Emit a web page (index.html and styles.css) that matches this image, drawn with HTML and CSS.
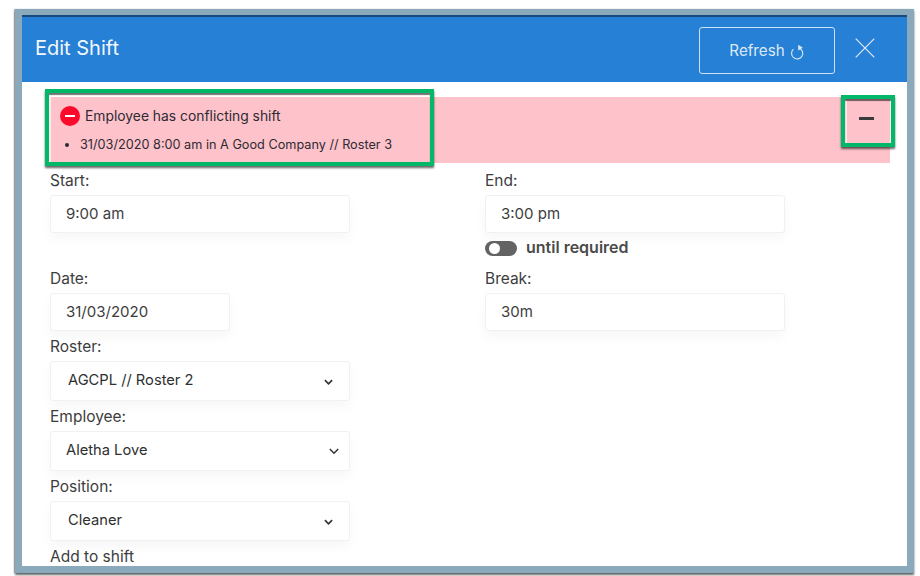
FILE: index.html
```html
<!DOCTYPE html>
<html lang="en">
<head>
<meta charset="utf-8">
<title>Edit Shift</title>
<link rel="stylesheet" href="styles.css">
</head>
<body>
<div class="frame">
  <header class="head">
    <h1 class="title">Edit Shift</h1>
    <button class="refresh">Refresh
      <svg class="refresh-icon" width="15" height="16" viewBox="0 0 15 16"><path d="M9.4 4.2A5.6 5.6 0 1 1 3.4 5.2" fill="none" stroke="#dbe9f7" stroke-width="1.1"/><path d="M8.2 .8l4.6 3-4.6 2.6z" fill="#dbe9f7"/></svg>
    </button>
    <svg class="close" width="20" height="20" viewBox="0 0 20 20"><path d="M.7.7l18.6 18.6M19.3.7L.7 19.3" stroke="#e6f0fa" stroke-width="1.1" fill="none"/></svg>
  </header>
  <main class="body">
    <section class="alert">
      <div class="alert-title"><span class="stop"><span class="stop-bar"></span></span>Employee has conflicting shift</div>
      <ul class="alert-list"><li>31/03/2020 8:00 am in A Good Company // Roster 3</li></ul>
    </section>
    <div class="note note-a"></div>
    <div class="note note-b"><span class="minus"></span></div>
    <div class="grid">
      <div class="cell">
        <label class="label">Start:</label>
        <div class="input">9:00 am</div>
      </div>
      <div class="cell">
        <label class="label">End:</label>
        <div class="input">3:00 pm</div>
        <div class="toggle-row"><span class="toggle"><span class="knob"></span></span><span class="toggle-text">until required</span></div>
      </div>
      <div class="cell">
        <label class="label">Date:</label>
        <div class="input input-date">31/03/2020</div>
      </div>
      <div class="cell">
        <label class="label">Break:</label>
        <div class="input">30m</div>
      </div>
    </div>
    <div class="stack">
      <label class="label">Roster:</label>
      <div class="select"><span class="val val-a">AGCPL // Roster 2</span><svg class="chev chev-a" width="9" height="7" viewBox="0 0 9 7"><path d="M.9 1.2l3.6 3.6 3.6-3.6" fill="none" stroke="#333" stroke-width="1.7"/></svg></div>
      <label class="label">Employee:</label>
      <div class="select"><span class="val val-b">Aletha Love</span><svg class="chev chev-b" width="10" height="7" viewBox="0 0 10 7"><path d="M.8 1l4.2 4.2L9.2 1" fill="none" stroke="#333" stroke-width="1.5"/></svg></div>
      <label class="label">Position:</label>
      <div class="select"><span class="val val-a">Cleaner</span><svg class="chev chev-a" width="9" height="7" viewBox="0 0 9 7"><path d="M.9 1.2l3.6 3.6 3.6-3.6" fill="none" stroke="#333" stroke-width="1.7"/></svg></div>
      <label class="label">Add to shift</label>
    </div>
  </main>
</div>
</body>
</html>
```
FILE: styles.css
```css
* { box-sizing: border-box; }
html, body { margin: 0; padding: 0; background: #fff; }
body { width: 920px; height: 576px; overflow: hidden; font-family: "Inter", "Liberation Sans", sans-serif; color: #3d3d3d; }
.frame { width: 899px; height: 564px; margin: 9px 0 0 15px; border: 7px solid #8aa9ba; border-top-width: 6px; display: flex; flex-direction: column; overflow: hidden; box-shadow: 0 2px 2px rgba(0,0,0,.6), -1px 0 1px rgba(0,0,0,.25); position: relative; }
.head { height: 67px; flex: none; background: #2680d5; border-top: 2px solid #17497a; display: flex; align-items: center; padding: 0 32px 0 13px; }
.title { margin: 0 auto 4px 0; font-size: 20px; font-weight: 400; color: #f2f7fc; }
.refresh { width: 136px; height: 47px; margin: 2px 0 0; background: transparent; border: 1px solid #cfe2f5; border-radius: 3px; color: #dbe9f7; font: 400 15.2px "Inter", "Liberation Sans", sans-serif; display: flex; align-items: center; justify-content: center; gap: 5px; padding: 0; }
.refresh-icon { margin-top: 2px; }
.close { margin: 0 0 3px 20px; }
.body { flex: 1; min-height: 0; background: #fff; padding: 15px 0 0 28px; position: relative; }
.alert { width: 840px; height: 66px; background: #fec2ca; padding: 9px 0 0 10px; color: #2d2a32; }
.alert-title { display: flex; align-items: center; gap: 5px; height: 20px; font-size: 13.85px; }
.stop { width: 20px; height: 20px; border-radius: 50%; background: #fb0a2c; display: flex; align-items: center; justify-content: center; flex: none; }
.stop-bar { width: 10px; height: 2.5px; background: #fff; }
.alert-list { margin: 10px 0 0; padding: 0 0 0 20px; font-size: 12.7px; line-height: 18px; }
.note { position: absolute; border: 4px solid #00b868; box-shadow: 0 2px 2px rgba(0,0,0,.6), inset 0 2px 1px rgba(0,0,0,.55), inset 2px 0 0 rgba(255,255,255,.6); }
.note-a { left: 23px; top: 7px; width: 389px; height: 77px; }
.note-b { left: 819px; top: 13px; width: 54px; height: 52px; display: flex; align-items: center; justify-content: center; padding: 0 4px 6px 0; }
.minus { width: 15px; height: 3px; background: #3a3a3a; }
.grid { display: grid; grid-template-columns: 435px 300px; grid-template-rows: 98px auto; }
.cell { display: flex; flex-direction: column; align-items: flex-start; }
.label { display: block; margin-top: 7px; margin-bottom: 3px; font-size: 15.5px; line-height: 22px; color: #3d3d3d; }
.stack .label { margin-top: 5px; }
.input { width: 300px; height: 38px; border: 1px solid #f1f1f1; border-radius: 3px; background: #fff; box-shadow: 0 6px 12px rgba(0,0,0,.035); padding: 0 15px 2px; display: flex; align-items: center; font-size: 15px; color: #3d3d3d; }
.input-date { width: 180px; }
.toggle-row { display: flex; align-items: center; gap: 9px; margin-top: 7px; height: 16px; }
.toggle { width: 32px; height: 15px; border-radius: 8px; background: #636363; padding: 2px 0 0 4px; display: block; }
.knob { display: block; width: 11px; height: 11px; border-radius: 50%; background: #fff; }
.toggle-text { font-size: 16px; font-weight: 600; color: #4a4a4a; margin-top: -2px; }
.stack { display: flex; flex-direction: column; align-items: flex-start; }
.select { width: 300px; height: 40px; border: 1px solid #f1f1f1; border-radius: 3px; background: #fff; box-shadow: 0 6px 12px rgba(0,0,0,.035); display: flex; align-items: center; justify-content: space-between; font-size: 14.7px; color: #2f2f2f; }
.val { margin-bottom: 3px; }
.val-a { margin-left: 17px; }
.val-b { margin-left: 15px; }
.chev-a { margin: 2px 16px 0 0; }
.chev-b { margin: 0 10px 0 0; }
```
